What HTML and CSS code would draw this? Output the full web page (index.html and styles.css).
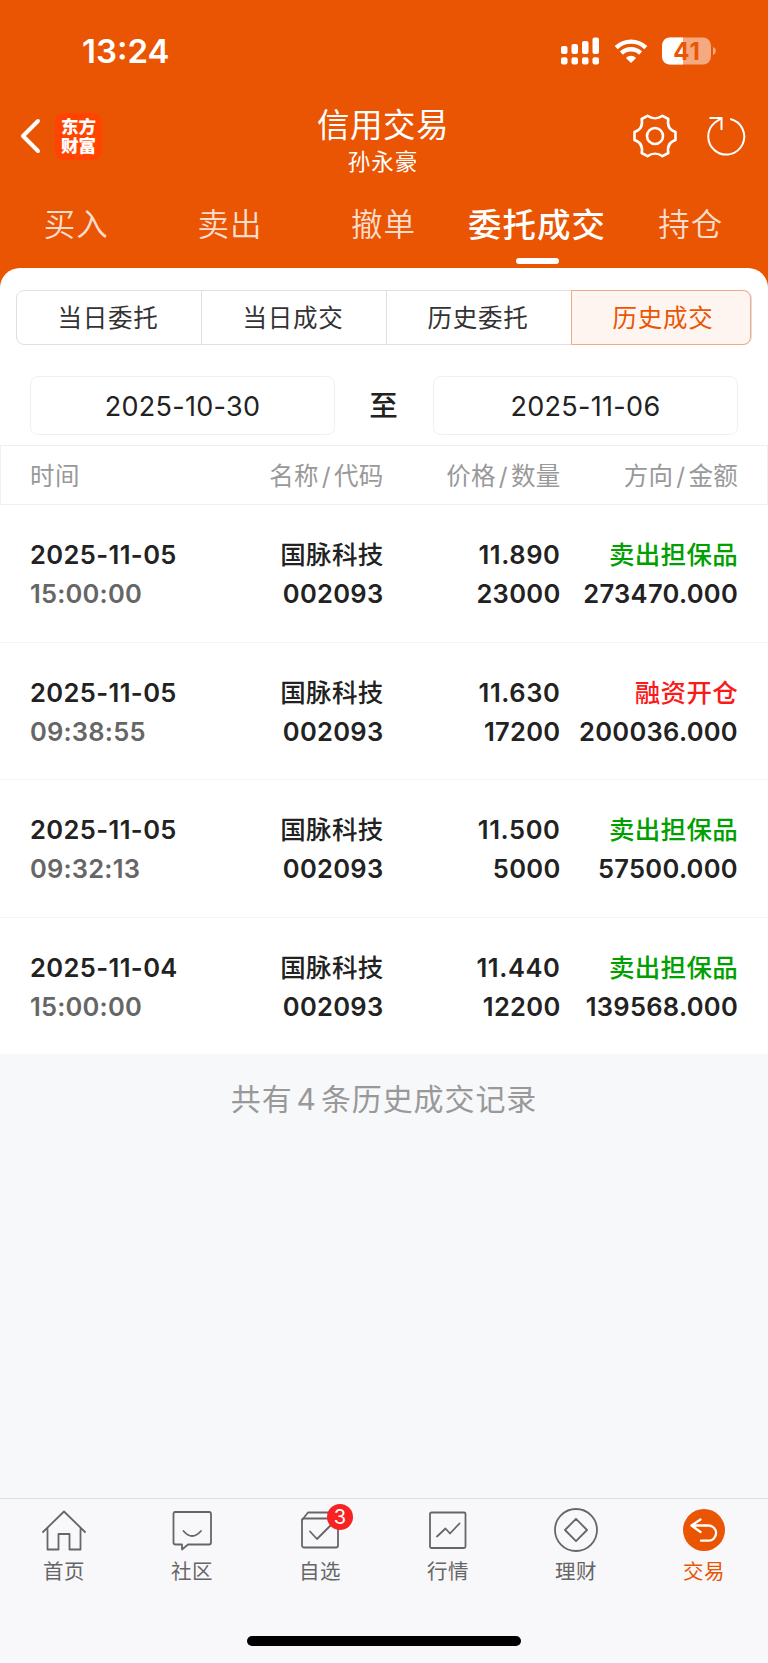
FILE: index.html
```
<!DOCTYPE html>
<html lang="zh-CN">
<head>
  <meta charset="UTF-8" />
  <meta name="viewport" content="width=device-width, initial-scale=1.0"/>
  <title>信用交易</title>
  <link rel="stylesheet" href="styles.css">
</head>
<body>
  <header class="header">
    <div class="status">
      <span class="clock">13:24</span>
      <div class="status-icons">
        <svg class="signal" width="40" height="28" viewBox="0 0 40 28" fill="#fff">
          <rect x="1" y="9" width="6.5" height="8" rx="2"/>
          <rect x="11.5" y="7" width="6.5" height="10" rx="2"/>
          <rect x="22" y="4" width="6.5" height="13" rx="2"/>
          <rect x="32.5" y="0.5" width="6.5" height="16.5" rx="2"/>
          <rect x="1" y="20.2" width="6.5" height="7.3" rx="2"/>
          <rect x="11.5" y="20.2" width="6.5" height="7.3" rx="2"/>
          <rect x="22" y="20.2" width="6.5" height="7.3" rx="2"/>
          <rect x="32.5" y="20.2" width="6.5" height="7.3" rx="2"/>
        </svg>
        <svg class="wifi" width="34" height="26" viewBox="0 0 34 26">
          <path d="M2.2 9.6a21.3 21.3 0 0 1 29.6 0" fill="none" stroke="#fff" stroke-width="4.4"/>
          <path d="M7.4 15.1a13.8 13.8 0 0 1 19.2 0" fill="none" stroke="#fff" stroke-width="4.4"/>
          <path d="M11.9 19.9a7.3 7.3 0 0 1 10.2 0L17 25z" fill="#fff"/>
        </svg>
        <svg class="battery" width="54" height="28" viewBox="0 0 54 28">
          <defs><clipPath id="level"><rect width="21" height="28"/></clipPath></defs>
          <rect y="0.5" width="49" height="27" rx="8" fill="#f5a981"/>
          <rect y="0.5" width="49" height="27" rx="8" fill="#fff" clip-path="url(#level)"/>
          <path d="M51 10c1.8.8 2.8 2.2 2.8 4s-1 3.200-2.8 4z" fill="#f5a981"/>
          <text class="battery-text" x="25" y="22.8" text-anchor="middle">41</text>
        </svg>
      </div>
    </div>

    <div class="navbar">
      <div class="nav-left">
        <svg width="22" height="36" viewBox="0 0 22 36" fill="none" stroke="#fff" stroke-width="4" stroke-linecap="round" stroke-linejoin="round">
          <path d="M18 3L3 18l15 15"/>
        </svg>
        <div class="logo">东方<br>财富</div>
      </div>
      <div class="nav-title">
        <h1>信用交易</h1>
        <p>孙永豪</p>
      </div>
      <div class="nav-right">
        <svg width="44" height="44" viewBox="0 0 44 44" fill="none" stroke="#fff" stroke-width="2.6" stroke-linejoin="round">
          <path d="M14.5 1.8C19 5 25 5 29.500 1.800L35.300 5C34 12 36.500 16 42.500 18V26C36.500 28 34 32 35.300 39L29.500 42.200C25 39 19 39 14.500 42.200L8.700 39C10 32 7.500 28 1.500 26V18C7.500 16 10 12 8.700 5z"/>
          <circle cx="22" cy="22" r="8"/>
        </svg>
        <svg width="40" height="40" viewBox="0 0 40 40" fill="none" stroke="#fff" stroke-width="2">
          <path d="M24.2 3A18 18 0 1 1 9 6.500L15.500 2.200"/>
          <path d="M3.500 2h12v12"/>
        </svg>
      </div>
    </div>

    <nav class="tabs">
      <a>买入</a>
      <a>卖出</a>
      <a>撤单</a>
      <a class="active">委托成交</a>
      <a>持仓</a>
    </nav>
  </header>

  <main class="panel">
    <div class="segments">
      <button>当日委托</button>
      <button>当日成交</button>
      <button>历史委托</button>
      <button class="active">历史成交</button>
    </div>

    <div class="dates">
      <div class="date">2025-10-30</div>
      <span class="to">至</span>
      <div class="date">2025-11-06</div>
    </div>

    <div class="row thead">
      <span>时间</span>
      <span>名称<i>/</i>代码</span>
      <span>价格<i>/</i>数量</span>
      <span>方向<i>/</i>金额</span>
    </div>

    <div class="row">
      <div>2025-11-05<br><span class="time">15:00:00</span></div>
      <div><b>国脉科技</b><br>002093</div>
      <div><span class="price">11.890</span><br>23000</div>
      <div><b class="sell">卖出担保品</b><br>273470.000</div>
    </div>
    <div class="row">
      <div>2025-11-05<br><span class="time">09:38:55</span></div>
      <div><b>国脉科技</b><br>002093</div>
      <div><span class="price">11.630</span><br>17200</div>
      <div><b class="buy">融资开仓</b><br>200036.000</div>
    </div>
    <div class="row">
      <div>2025-11-05<br><span class="time">09:32:13</span></div>
      <div><b>国脉科技</b><br>002093</div>
      <div><span class="price">11.500</span><br>5000</div>
      <div><b class="sell">卖出担保品</b><br>57500.000</div>
    </div>
    <div class="row">
      <div>2025-11-04<br><span class="time">15:00:00</span></div>
      <div><b>国脉科技</b><br>002093</div>
      <div><span class="price">11.440</span><br>12200</div>
      <div><b class="sell">卖出担保品</b><br>139568.000</div>
    </div>
  </main>

  <p class="summary">共有<span>4</span>条历史成交记录</p>

  <footer class="tabbar">
    <div class="tabbar-items">
      <a>
        <svg width="46" height="46" viewBox="0 0 46 46">
          <path d="M2 24L23 3.500 44 24M6.500 20.500V41.500H17.500V26H28.500V41.500H39.500V20.500"/>
        </svg>
        首页
      </a>
      <a>
        <svg width="46" height="46" viewBox="0 0 46 46">
          <path d="M6 4H40Q42 4 42 6V34.500Q42 36.500 40 36.500H19L13 41.500V36.500H6.500Q4.500 36.500 4.500 34.500V6Q4.500 4 6 4z"/>
          <path d="M14.500 23q8.500 10 17.500 0"/>
        </svg>
        社区
      </a>
      <a>
        <svg width="46" height="46" viewBox="0 0 46 46">
          <rect x="5" y="10.5" width="36" height="29" rx="2"/>
          <path d="M5 12L11 4.500H36L41 11M13 23.500l7 7.500L34 17"/>
        </svg>
        <span class="badge">3</span>
        自选
      </a>
      <a>
        <svg width="46" height="46" viewBox="0 0 46 46">
          <rect x="5" y="4.5" width="35.5" height="35.5" rx="1.5"/>
          <path d="M12 28.500l8.500-8 4.500 5L34.500 15.500"/>
        </svg>
        行情
      </a>
      <a>
        <svg width="46" height="46" viewBox="0 0 46 46">
          <circle cx="23" cy="22" r="21"/>
          <path d="M23 10.800L34 22 23 33.200 12 22z"/>
        </svg>
        理财
      </a>
      <a class="active">
        <svg width="46" height="46" viewBox="0 0 46 46">
          <circle class="disc" cx="23" cy="22" r="21"/>
          <path class="arrow" d="M19.500 11.500L10.500 17.500 19.500 24M11 17.500H27.500a7.600 7.600 0 0 1 0 15.200H20"/>
        </svg>
        交易
      </a>
    </div>
    <div class="home-bar"></div>
  </footer>
</body>
</html>
```
FILE: styles.css
```
* {
  box-sizing: border-box;
}
body {
  margin: 0;
  min-height: 1663px;
  display: flex;
  flex-direction: column;
  background: #f7f8fa;
  color: #222;
  font-family: Inter, "Noto Sans CJK SC", sans-serif;
}

/* header */
.header {
  height: 286px;
  background: #ea5504;
  color: #fff;
}
.status {
  height: 102px;
  padding: 0 52px 0 82px;
  display: flex;
  align-items: center;
  justify-content: space-between;
}
.clock {
  font-size: 33px;
  font-weight: 600;
}
.status-icons {
  display: flex;
  align-items: center;
  gap: 14px;
}
.battery-text {
  font-size: 24px;
  font-weight: 700;
  letter-spacing: 1px;
  fill: #ea5504;
}
.navbar {
  height: 68px;
  margin-top: -4px;
  padding: 0 22px 0 20px;
  display: grid;
  grid-template-columns: 1fr auto 1fr;
  align-items: center;
}
.nav-left,
.nav-right {
  display: flex;
  align-items: center;
  padding-bottom: 4px;
}
.nav-left {
  gap: 13px;
}
.nav-right {
  justify-content: flex-end;
  gap: 29px;
}
.logo {
  width: 47px;
  height: 47px;
  padding-top: 4px;
  border-radius: 9px;
  background: #ff4400;
  font-size: 17.5px;
  font-weight: 900;
  line-height: 19.5px;
  text-align: center;
}
.nav-title {
  padding-top: 8px;
  text-align: center;
}
.nav-title h1 {
  margin: 0;
  font-size: 32.5px;
  font-weight: 400;
  line-height: 40px;
  letter-spacing: 0.5px;
}
.nav-title p {
  margin: 0;
  font-size: 22.5px;
  line-height: 32px;
  letter-spacing: 1px;
}
.tabs {
  height: 98px;
  margin-top: 4px;
  display: flex;
}
.tabs a {
  flex: 1 0 0;
  position: relative;
  height: 108px;
  padding-right: 1px;
  font-size: 31.5px;
  font-weight: 350;
  line-height: 110px;
  text-align: center;
  white-space: nowrap;
  letter-spacing: 1px;
  color: #fbddcd;
}
.tabs a.active {
  font-size: 33.5px;
  font-weight: 500;
  color: #fff;
}
.tabs a.active::after {
  content: "";
  position: absolute;
  left: 55px;
  top: 88px;
  width: 43px;
  height: 6px;
  border-radius: 3px;
  background: #fff;
}

/* panel */
.panel {
  position: relative;
  margin-top: -18px;
  padding-top: 22px;
  border-radius: 20px 20px 0 0;
  background: #fff;
}
.segments {
  height: 55px;
  margin: 0 16px;
  display: grid;
  grid-template-columns: 185px 185px 185px 1fr;
  border: 1px solid #dfdfe4;
  border-radius: 8px;
}
.segments button {
  padding: 0 2px 2px 0;
  border: 0;
  border-right: 1.5px solid #dfdfe4;
  background: none;
  color: #333;
  font: 400 24.5px Inter, "Noto Sans CJK SC", sans-serif;
  letter-spacing: 0.8px;
}
.segments .active {
  margin: -1px 0 -1px -1px;
  padding: 0 0 2px 4px;
  border: 1.5px solid #f0aa85;
  border-radius: 0 8px 8px 0;
  background: #fff5f0;
  color: #ea5504;
}
.dates {
  padding: 31px 30px 10px;
  display: flex;
  align-items: center;
  justify-content: space-between;
}
.date {
  width: 305px;
  height: 59px;
  border: 1px solid #f0f0f2;
  border-radius: 8px;
  font-size: 27px;
  line-height: 60px;
  letter-spacing: 0.3px;
  text-align: center;
}
.to {
  padding: 1px 1px 0 0;
  font-size: 28.5px;
  font-weight: 500;
  line-height: 40px;
}
.row {
  height: 137.5px;
  padding: 30px 30px 0;
  display: grid;
  grid-template-columns: 160px 193.5px 177px 177.5px;
  border-bottom: 1px solid #f5f5f7;
  font-size: 25.5px;
  font-weight: 600;
  line-height: 39px;
  letter-spacing: 0.3px;
  white-space: nowrap;
}
.row > * {
  text-align: right;
}
.row > :first-child {
  text-align: left;
  letter-spacing: 0.4px;
}
.row b {
  font-weight: 500;
}
.row .price {
  letter-spacing: 0.6px;
}
.row .time {
  color: #666;
  letter-spacing: 0.2px;
}
.row .sell {
  color: #00a000;
}
.row .buy {
  color: #f91a1a;
}
.row:last-child {
  height: 136.5px;
  border-bottom: 0;
}
.thead {
  height: 60px;
  padding: 0 29px;
  border: 1px solid #f0f0f2;
  color: #999;
  font-size: 24.5px;
  font-weight: 400;
  line-height: 60px;
}
.thead i {
  margin: 0 3px;
  font-style: normal;
}
.summary {
  margin: 23px 0 0;
  color: #999;
  font-size: 30px;
  line-height: 44px;
  letter-spacing: 0.9px;
  text-align: center;
}
.summary span {
  margin: 0 4px;
}

/* bottom bar */
.tabbar {
  height: 165px;
  margin-top: auto;
  display: flex;
  flex-direction: column;
  border-top: 1px solid #dededf;
  background: #f8f8fb;
}
.tabbar-items {
  display: flex;
}
.tabbar-items a {
  flex: 1;
  position: relative;
  height: 137px;
  padding-top: 9px;
  display: flex;
  flex-direction: column;
  align-items: center;
  color: #666;
  font-size: 20.5px;
  line-height: 35px;
  letter-spacing: 0.5px;
}
.tabbar-items svg {
  fill: none;
  stroke: #666;
  stroke-width: 1.8;
  stroke-linejoin: round;
  stroke-linecap: round;
}
.tabbar-items .active {
  color: #ea5504;
}
.tabbar-items .disc {
  fill: #ea5504;
  stroke: none;
}
.tabbar-items .arrow {
  stroke: #fff;
  stroke-width: 2.3;
}
.badge {
  position: absolute;
  top: 5px;
  left: 71px;
  width: 26px;
  height: 26px;
  border-radius: 50%;
  background: #f92222;
  color: #fff;
  font-size: 20px;
  line-height: 26px;
  letter-spacing: 0;
  text-align: center;
}
.home-bar {
  width: 274px;
  height: 10px;
  margin: 0 auto;
  border-radius: 5px;
  background: #000;
}
```
